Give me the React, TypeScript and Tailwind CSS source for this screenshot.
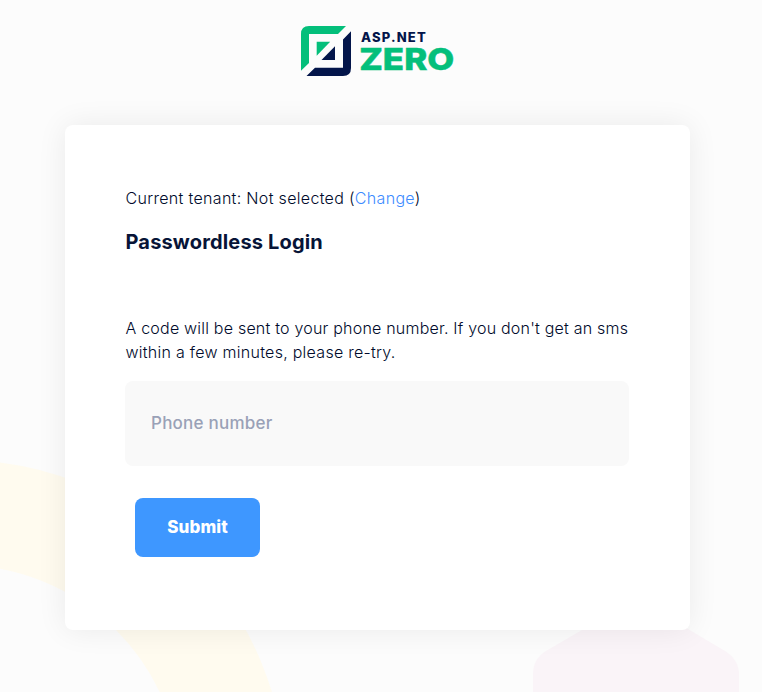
function Backdrop() {
  return (
    <svg className="absolute inset-0 -z-10" width="762" height="692" viewBox="0 0 762 692" fill="none" aria-hidden="true">
      <circle cx="-41" cy="787" r="274.5" stroke="#fffbef" strokeWidth="105" />
      <path d="M533 692V674Q533 659 546 651L606 616Q636 600 666 616L725 651Q739 660 739 674V692Z" fill="#faf4f8" />
    </svg>
  );
}

function Logo() {
  return (
    <svg width="154" height="50" viewBox="0 0 154 50" role="img" aria-label="ASP.NET ZERO">
      <g fill="#04bf7b">
        <path d="M0 44.8V8Q0 0 8 0H45L37 8H8V37Z" />
        <path d="M15.7 15.7H29.2L15.7 29.8Z" />
      </g>
      <g fill="#03154a">
        <path d="M50 5.2V42Q50 50 42 50H5.5L14 41.8H42V13.5Z" />
        <path d="M34 20.2V34H20.5Z" />
      </g>
      <text x="60" y="15.5" textLength="64.8" lengthAdjust="spacing" className="fill-[#03154a] font-[Inter,sans-serif] text-[13px] font-extrabold">ASP.NET</text>
      <text x="58.2" y="43.6" textLength="95" lengthAdjust="spacingAndGlyphs" className="fill-[#04bf7b] stroke-[#04bf7b] stroke-[0.5] font-[Inter,sans-serif] text-[30.5px] font-extrabold">ZERO</text>
    </svg>
  );
}

export default function App() {
  return (
    <div className="relative isolate h-[692px] w-[762px] overflow-hidden bg-[#fcfcfc] font-[Inter,sans-serif] text-[#071437]">
      <Backdrop />
      <header className="flex h-[125px] pl-[301px] pt-[26px]">
        <Logo />
      </header>
      <main className="ml-[65px] h-[505px] w-[625px] rounded-lg bg-white px-[60px] pt-[61px] shadow-[0_0_30px_rgba(0,0,0,0.075)]">
        <p className="pl-[0.5px] text-base font-light tracking-[0.32px] text-[#000a2b]">
          Current tenant: Not selected (<a href="#" className="text-[#3e8cff]">Change</a>)
        </p>
        <h1 className="mt-[17px] pl-[0.5px] text-xl font-bold leading-[30px] tracking-[0.16px]">Passwordless Login</h1>
        <form onSubmit={(e) => e.preventDefault()}>
          <p className="mt-[59px] whitespace-nowrap pl-[0.5px] text-base font-light tracking-[0.21px] text-[#000a2b]">
            A code will be sent to your phone number. If you don't get an sms
            <br />
            <span className="tracking-[0.27px]">within a few minutes, please re-try.</span>
          </p>
          <input
            placeholder="Phone number"
            className="mt-[17px] block h-[84.5px] w-[504px] rounded-lg bg-[#f9f9f9] px-[26px] text-[17px] font-medium tracking-[0.24px] outline-none placeholder:text-[#99a1b7]"
          />
          <button className="ml-[10px] mt-[32.5px] block h-[59px] w-[125px] rounded-lg bg-[#3e97ff] text-[17px] font-extrabold tracking-[0.1px] text-white">
            Submit
          </button>
        </form>
      </main>
    </div>
  );
}
